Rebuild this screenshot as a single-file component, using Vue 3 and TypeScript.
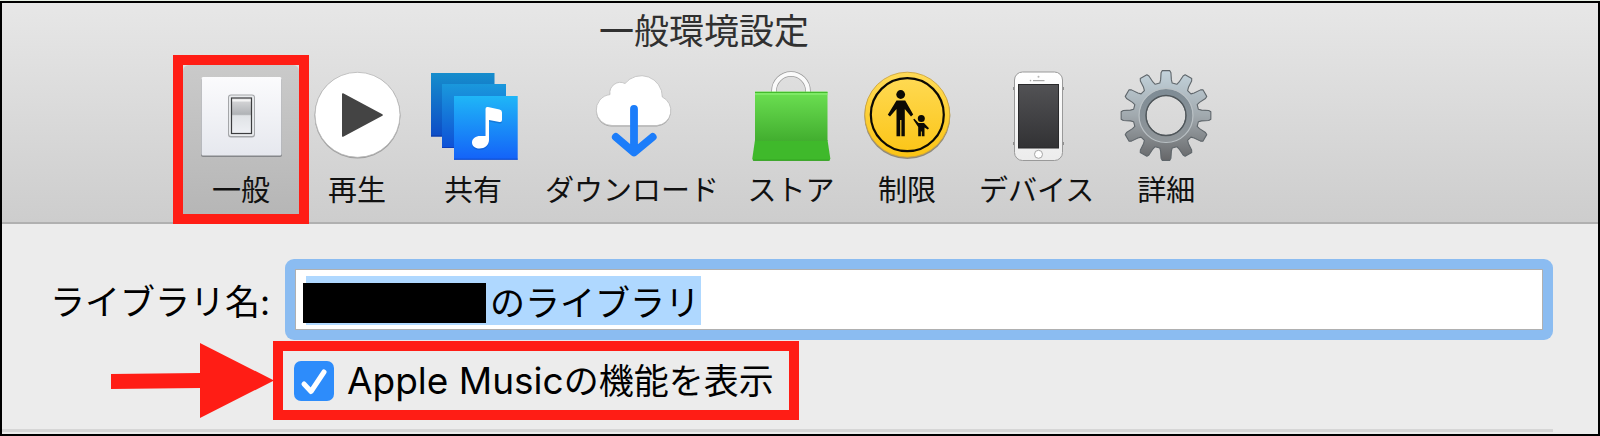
<script setup lang="ts">
import { ref } from 'vue'

type IconName =
  | 'switch'
  | 'play'
  | 'share'
  | 'download'
  | 'store'
  | 'restrict'
  | 'device'
  | 'gear'

interface Pane {
  icon: IconName
  label: string
}

const panes: Pane[] = [
  { icon: 'switch', label: '一般' },
  { icon: 'play', label: '再生' },
  { icon: 'share', label: '共有' },
  { icon: 'download', label: 'ダウンロード' },
  { icon: 'store', label: 'ストア' },
  { icon: 'restrict', label: '制限' },
  { icon: 'device', label: 'デバイス' },
  { icon: 'gear', label: '詳細' },
]

const selected = ref<IconName>('switch')
const libraryName = ref('のライブラリ')
const showAppleMusic = ref(true)

function gearOutline(cx: number, cy: number, teeth: number): string {
  const step = (Math.PI * 2) / teeth
  const profile: Array<[number, number]> = [
    [33, -0.19],
    [36, -0.15],
    [43, -0.115],
    [45, -0.085],
    [45, 0.085],
    [43, 0.115],
    [36, 0.15],
    [33, 0.19],
  ]
  const points: string[] = []
  for (let i = 0; i < teeth; i++) {
    for (const [r, offset] of profile) {
      const a = i * step + offset
      points.push(`${(cx + r * Math.cos(a)).toFixed(2)} ${(cy + r * Math.sin(a)).toFixed(2)}`)
    }
  }
  const hole = 20
  return (
    `M${points.join('L')}Z` +
    `M${cx - hole} ${cy}a${hole} ${hole} 0 1 0 ${hole * 2} 0a${hole} ${hole} 0 1 0 ${-hole * 2} 0Z`
  )
}

const gearPath = gearOutline(45, 45.5, 12)
</script>

<template>
  <div class="page">
    <main class="window">
      <header class="header">
        <h1 class="title">一般環境設定</h1>
        <nav class="toolbar" aria-label="環境設定">
          <button
            v-for="pane in panes"
            :key="pane.icon"
            type="button"
            class="pane"
            :class="{ selected: pane.icon === selected }"
            :aria-pressed="pane.icon === selected"
            @click="selected = pane.icon"
          >
            <span class="pane-body">
              <svg class="icon" viewBox="0 0 90 90" aria-hidden="true">
                <g v-if="pane.icon === 'switch'">
                  <defs>
                    <linearGradient id="plate" x1="0" y1="0" x2="0" y2="1">
                      <stop offset="0" stop-color="#fbfbfd" />
                      <stop offset="1" stop-color="#e6e8ee" />
                    </linearGradient>
                    <linearGradient id="rocker" x1="0" y1="0" x2="0" y2="1">
                      <stop offset="0" stop-color="#e4e5e7" />
                      <stop offset="0.1" stop-color="#d2d3d5" />
                      <stop offset="0.46" stop-color="#b0b3b6" />
                      <stop offset="0.5" stop-color="#e0e3e6" />
                      <stop offset="1" stop-color="#eef0f4" />
                    </linearGradient>
                  </defs>
                  <rect x="5" y="8" width="81" height="79" rx="2" fill="#85878a" />
                  <rect x="5.500" y="7" width="80" height="78.500" rx="1.500" fill="url(#plate)" />
                  <rect x="32" y="24.500" width="27" height="43" rx="3" fill="#a4a6a9" />
                  <rect x="33" y="25.500" width="25" height="40.500" rx="2" fill="#e9ebee" />
                  <rect x="35.500" y="28" width="20" height="35.500" fill="url(#rocker)" stroke="#3c3d3f" stroke-width="1.200" />
                  <path d="M36.500 30.500H54.500" stroke="#f4f4f4" stroke-width="2" />
                </g>

                <g v-else-if="pane.icon === 'play'">
                  <circle cx="45.500" cy="45.500" r="43" fill="#9c9c9c" />
                  <circle cx="45.500" cy="44.800" r="42.500" fill="#fff" stroke="#b9b9b9" stroke-width="0.800" />
                  <path d="M30.800 24L70 45L30.800 66Z" fill="#444" stroke="#444" stroke-width="1.600" stroke-linejoin="round" />
                </g>

                <g v-else-if="pane.icon === 'share'">
                  <defs>
                    <linearGradient id="share-back" x1="0" y1="0" x2="0" y2="1">
                      <stop offset="0" stop-color="#168dcc" />
                      <stop offset="1" stop-color="#0d4cc6" />
                    </linearGradient>
                    <linearGradient id="share-mid" x1="0" y1="0" x2="0" y2="1">
                      <stop offset="0" stop-color="#1a98dc" />
                      <stop offset="1" stop-color="#0e50d6" />
                    </linearGradient>
                    <linearGradient id="share-front" x1="0" y1="0" x2="0" y2="1">
                      <stop offset="0" stop-color="#1fb6f7" />
                      <stop offset="1" stop-color="#1462f8" />
                    </linearGradient>
                  </defs>
                  <rect x="3" y="3" width="63.500" height="63.500" fill="url(#share-back)" />
                  <path d="M3 66H14" stroke="#0b38a2" />
                  <rect x="14" y="14" width="64" height="64" fill="url(#share-mid)" />
                  <path d="M14 77.500H26" stroke="#0c3cb8" />
                  <rect x="26" y="26" width="63.700" height="63.700" fill="url(#share-front)" />
                  <path d="M26 89.200H89.700" stroke="#0f4ac8" />
                  <path d="M57.500 40.500Q57.500 38 60 38.500L71.500 41Q74 41.500 74 44V51.500Q74 54 71.500 53.500L61 51.500V71.500C61 76.500 56.500 80 51.500 80C47 80 44 77.500 44 74C44 70 48 67.500 52 67.500H57.500Z" fill="#0d4fae" opacity="0.400" />
                  <path d="M57.500 39Q57.500 36.500 60 37L71.500 39.500Q74 40 74 42.500V50Q74 52.500 71.500 52L61 50V70C61 75 56.500 78.500 51.500 78.500C47 78.500 44 76 44 72.500C44 68.500 48 66 52 66H57.500Z" fill="#fff" />
                </g>

                <g v-else-if="pane.icon === 'download'">
                  <path d="M25 56.500A15.500 15.500 0 0 1 23 25.600A10.500 10.500 0 0 1 38 14.500A21 21 0 0 1 75.300 28A15 15 0 0 1 70 56.500Z" fill="#a2a2a2" />
                  <path d="M25 55.500A15.500 15.500 0 0 1 23 24.600A10.500 10.500 0 0 1 38 13.500A21 21 0 0 1 75.300 27A15 15 0 0 1 70 55.500Z" fill="#fff" stroke="#bdbdbd" stroke-width="0.800" />
                  <path d="M47 39V82M28.800 67L47 82.500L65.700 67" fill="none" stroke="#1c7dfa" stroke-width="7.800" stroke-linecap="round" stroke-linejoin="round" />
                </g>

                <g v-else-if="pane.icon === 'store'">
                  <defs>
                    <linearGradient id="bag" x1="0" y1="0" x2="0" y2="1">
                      <stop offset="0" stop-color="#6ce052" />
                      <stop offset="1" stop-color="#42ae2f" />
                    </linearGradient>
                  </defs>
                  <path d="M28 24V21A17 17 0 0 1 62 21V24" fill="none" stroke="#9b9b9b" stroke-width="5.500" />
                  <path d="M28 24V21A17 17 0 0 1 62 21V24" fill="none" stroke="#fafafa" stroke-width="4" />
                  <path d="M9 70L6.300 88.500Q6.300 90.700 8.500 90.700H82Q84.300 90.700 84.300 88.500L81.500 70Z" fill="#3fb92b" />
                  <path d="M7 90.200H83.500" stroke="#2f9c1e" />
                  <rect x="9" y="21.500" width="72.500" height="49.500" fill="url(#bag)" />
                  <path d="M9 22.500H81.500" stroke="#43bb2c" />
                  <path d="M9 24H81.500" stroke="#86ec6e" stroke-width="1.500" />
                </g>

                <g v-else-if="pane.icon === 'restrict'">
                  <defs>
                    <linearGradient id="sign" x1="0" y1="0" x2="0" y2="1">
                      <stop offset="0" stop-color="#ffdb57" />
                      <stop offset="1" stop-color="#fbc414" />
                    </linearGradient>
                  </defs>
                  <circle cx="45.300" cy="46" r="43" fill="#8f8a7c" />
                  <circle cx="45.300" cy="44.700" r="42.500" fill="url(#sign)" stroke="#cfa63c" stroke-width="0.900" />
                  <circle cx="45.300" cy="44.700" r="36.500" fill="none" stroke="#0c0a04" stroke-width="2.200" />
                  <g fill="#0c0a04">
                    <circle cx="38.700" cy="24.500" r="4.400" />
                    <path d="M34.500 30.500H43.200L51.200 44.500L49 46.500L42.800 39V66.300H39.400V50H38.200V66.300H34.500V39L28 46.500L25.800 44.800Z" />
                    <circle cx="59.300" cy="48.500" r="3.500" />
                    <path d="M51.200 49.500L52.400 48.700L56.500 53H62L67 58.200L65.800 59.500L62.500 57.500V66.300H59.800V61.500H58.900V66.300H56.200V57Z" />
                  </g>
                </g>

                <g v-else-if="pane.icon === 'device'">
                  <defs>
                    <linearGradient id="glass" x1="0" y1="0" x2="0" y2="1">
                      <stop offset="0" stop-color="#525255" />
                      <stop offset="1" stop-color="#323234" />
                    </linearGradient>
                    <linearGradient id="phone" x1="0" y1="0" x2="0" y2="1">
                      <stop offset="0" stop-color="#fff" />
                      <stop offset="1" stop-color="#ececec" />
                    </linearGradient>
                  </defs>
                  <path d="M22 17V20M71 17V20M22 72V75M71 72V75" stroke="#777" stroke-width="1.500" />
                  <rect x="22.500" y="2" width="48" height="88.500" rx="8" fill="url(#phone)" stroke="#999" />
                  <rect x="26.500" y="14.500" width="40" height="63.500" fill="url(#glass)" stroke="#29292b" />
                  <circle cx="46.500" cy="6.800" r="1" fill="#b6b6b6" />
                  <circle cx="38.500" cy="10.600" r="0.800" fill="#aaa" />
                  <path d="M41 10.600H52.500" stroke="#aaa" stroke-width="1.200" />
                  <circle cx="46.500" cy="84.300" r="4" fill="#fff" stroke="#a5a5a5" />
                </g>

                <g v-else>
                  <defs>
                    <linearGradient id="metal" x1="0" y1="0" x2="0" y2="1">
                      <stop offset="0" stop-color="#c3d3dc" />
                      <stop offset="0.500" stop-color="#a1a9ae" />
                      <stop offset="1" stop-color="#666769" />
                    </linearGradient>
                    <linearGradient id="collar" x1="0" y1="0" x2="0" y2="1">
                      <stop offset="0" stop-color="#7f8c95" />
                      <stop offset="1" stop-color="#8f9599" />
                    </linearGradient>
                  </defs>
                  <path :d="gearPath" fill="url(#metal)" fill-rule="evenodd" stroke="#5f666b" stroke-width="1.100" stroke-linejoin="round" />
                  <circle cx="45" cy="45.500" r="23.500" fill="none" stroke="url(#collar)" stroke-width="6" />
                  <circle cx="45" cy="45.500" r="27" fill="none" stroke="#b9c0c4" stroke-width="1.200" />
                  <circle cx="45" cy="45.500" r="20" fill="none" stroke="#50575b" stroke-width="1.400" />
                </g>
              </svg>
              <span class="pane-label">{{ pane.label }}</span>
            </span>
          </button>
        </nav>
      </header>

      <form class="form" @submit.prevent>
        <div class="name-row">
          <label class="name-label" for="library-name">ライブラリ名:</label>
          <div class="field">
            <input id="library-name" v-model="libraryName" class="name-input" type="text" />
            <span class="redaction" aria-hidden="true"></span>
          </div>
        </div>

        <div class="music-row">
          <svg class="arrow" viewBox="0 0 163 75" aria-hidden="true">
            <path d="M0 31L89 30V0L163 37.500L89 75V45L0 46Z" fill="#ff1d15" />
          </svg>
          <label class="music-option">
            <input v-model="showAppleMusic" class="check" type="checkbox" />
            <svg v-if="showAppleMusic" class="tick" viewBox="0 0 40 40" aria-hidden="true">
              <path d="M10 23L17 30.500L30 11" />
            </svg>
            <span class="music-text"><span class="latin">Apple Music</span>の機能を表示</span>
          </label>
        </div>
        <hr class="divider" />
      </form>
    </main>
  </div>
</template>

<style>
body {
  background: #ececec;
}
</style>

<style scoped>
.page {
  box-sizing: border-box;
  min-height: 100vh;
  padding-top: 1px;
  display: flex;
  flex-direction: column;
  background: #e6efe4;
  color: #000;
  font-family: Inter, 'Noto Sans CJK JP', sans-serif;
}

.window {
  flex: 1;
  border: 2px solid #000;
  background: #ececec;
}

.header {
  padding-bottom: 8px;
  border-bottom: 2px solid #b0b0b0;
  background: linear-gradient(#e7e7e7, #cdcdcd);
}

.title {
  box-sizing: border-box;
  width: 1404px;
  max-width: 100%;
  height: 62px;
  margin: 0;
  color: #303030;
  font-size: 35px;
  font-weight: 400;
  line-height: 56px;
  text-align: center;
}

.toolbar {
  display: flex;
  padding-left: 181px;
}

.pane {
  flex: none;
  min-width: 116px;
  padding: 0;
  border: 0;
  background: none;
  color: #111;
  font: inherit;
  font-size: 29px;
}

.pane.selected {
  position: relative;
  box-shadow: 0 0 0 10px #ff1d15;
}

.pane-body {
  display: flex;
  flex-direction: column;
  align-items: center;
  gap: 9px;
  padding: 5px 0;
}

.selected .pane-body {
  border-radius: 6px 6px 0 0;
  background: linear-gradient(#cacaca, #b6b6b6);
}

.icon {
  width: 90px;
  height: 90px;
  overflow: visible;
}

.pane-label {
  height: 40px;
  padding: 0 14px;
  line-height: 43px;
  white-space: nowrap;
}

.name-row {
  display: flex;
  align-items: center;
  padding: 35px 45px 0 48px;
  font-size: 35px;
}

.name-label {
  flex: none;
  width: 235px;
  padding-top: 5px;
  line-height: 60px;
  white-space: nowrap;
}

.field {
  position: relative;
  flex: 1;
  padding: 10px;
  border-radius: 9px;
  background: #8bbcf1;
}

.name-input {
  display: block;
  box-sizing: border-box;
  width: 100%;
  height: 61px;
  padding: 2px 8px 0 194px;
  border: 1px solid #b0b0b0;
  border-radius: 0;
  outline: 0;
  background: linear-gradient(#afd8ff, #afd8ff) 10px 6px / 395px 49px no-repeat #fff;
  color: #000;
  font: inherit;
}

.redaction {
  position: absolute;
  top: 24px;
  left: 18px;
  width: 183px;
  height: 40px;
  background: #000;
}

.music-row {
  display: flex;
  align-items: center;
  padding: 1px 0 0 109px;
}

.arrow {
  flex: none;
  width: 163px;
  height: 75px;
}

.music-option {
  position: relative;
  display: flex;
  align-items: center;
  gap: 13px;
  margin-left: -1px;
  padding: 0 15px 0 11px;
  border: 10px solid #ff1d15;
  font-size: 35px;
  white-space: nowrap;
}

.music-text {
  height: 59px;
  line-height: 61px;
}

.latin {
  font-size: 37px;
  line-height: 1;
}

.check {
  appearance: none;
  flex: none;
  width: 40px;
  height: 40px;
  margin: 0;
  border-radius: 7px;
  background: #2d8cfb;
}

.check:not(:checked) {
  background: #fff;
}

.tick {
  position: absolute;
  left: 11px;
  width: 40px;
  height: 40px;
  fill: none;
  stroke: #fff;
  stroke-width: 5;
  stroke-linecap: round;
  stroke-linejoin: round;
  pointer-events: none;
}

.divider {
  height: 3px;
  margin: 9px 45px 2px 0;
  border: 0;
  background: #d6d6d6;
}
</style>
